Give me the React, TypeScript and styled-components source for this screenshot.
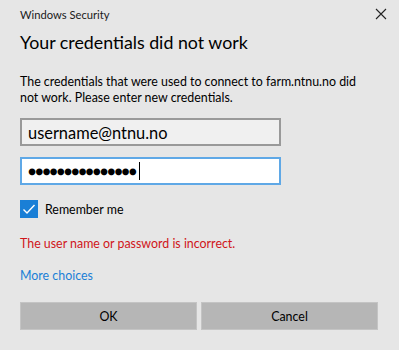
import React from "react";
import styled, { createGlobalStyle } from "styled-components";

const Global = createGlobalStyle`
  html, body { margin: 0; padding: 0; }
  body {
    background: #e6e6e6;
    font-family: "Lato", "Noto Sans", sans-serif;
    color: #000;
  }
`;

const Dialog = styled.div`
  width: 399px;
  height: 350px;
  box-sizing: border-box;
  background: #e6e6e6;
  display: flex;
  flex-direction: column;
  padding: 0 21px 0 20px;
`;

const Header = styled.div`
  height: 28px;
  display: flex;
  align-items: center;
  justify-content: space-between;
`;

const Caption = styled.div`
  font-size: 11.2px;
  color: #1a1a1a;
`;

const Close = styled.div`
  width: 12px;
  height: 12px;
  display: flex;
  margin-right: -9px;
`;

const Title = styled.h1`
  margin: 0;
  font-size: 17.8px;
  font-weight: 400;
  line-height: 28px;
`;

const Message = styled.p`
  margin: 18px 0 0;
  max-width: 342px;
  font-size: 12.4px;
  line-height: 16px;
`;

const Input = styled.div<{ $active?: boolean }>`
  margin-top: ${(p) => (p.$active ? "11px" : "12px")};
  width: 261px;
  height: 28px;
  box-sizing: border-box;
  border: 2px solid ${(p) => (p.$active ? "#5fa8e6" : "#999999")};
  background: ${(p) => (p.$active ? "#ffffff" : "#f0f0f0")};
  display: flex;
  align-items: center;
  padding-left: 6px;
  font-size: 16.4px;
`;

const Dots = styled.span`
  font-size: 13.5px;
  letter-spacing: -0.9px;
`;

const Caret = styled.span`
  width: 1px;
  height: 18px;
  background: #000;
  margin-left: 3px;
`;

const CheckRow = styled.div`
  margin-top: 15px;
  display: flex;
  align-items: center;
  height: 18px;
  gap: 7px;
  font-size: 12.4px;
`;

const Box = styled.div`
  width: 18px;
  height: 18px;
  background: #1a7fd6;
  display: flex;
  align-items: center;
  justify-content: center;
`;

const ErrorText = styled.div`
  margin-top: 16px;
  color: #d0151a;
  font-size: 12.4px;
  line-height: 20px;
`;

const Link = styled.div`
  margin-top: 12px;
  color: #1b7fd6;
  font-size: 12.4px;
  line-height: 20px;
`;

const Buttons = styled.div`
  margin-top: 16px;
  display: grid;
  grid-template-columns: 177px 177px;
  gap: 4px;
`;

const Button = styled.div`
  height: 28px;
  box-sizing: border-box;
  background: #b6b6b6;
  border: 1px solid #c4c4c4;
  display: flex;
  align-items: center;
  justify-content: center;
  font-size: 12.4px;
`;

export default function App() {
  return (
    <>
      <Global />
      <Dialog>
        <Header>
          <Caption>Windows Security</Caption>
          <Close>
            <svg width="12" height="12" viewBox="0 0 12 12">
              <path d="M1 1L11 11M11 1L1 11" stroke="#222" strokeWidth="1.1" fill="none" />
            </svg>
          </Close>
        </Header>
        <Title>Your credentials did not work</Title>
        <Message>
          The credentials that were used to connect to farm.ntnu.no did not work. Please enter new credentials.
        </Message>
        <Input>username@ntnu.no</Input>
        <Input $active>
          <Dots>●●●●●●●●●●●●●●●</Dots>
          <Caret />
        </Input>
        <CheckRow>
          <Box>
            <svg width="14" height="14" viewBox="0 0 14 14">
              <path d="M1.5 7.5L5 11L12.5 3" stroke="#fff" strokeWidth="1.4" fill="none" />
            </svg>
          </Box>
          Remember me
        </CheckRow>
        <ErrorText>The user name or password is incorrect.</ErrorText>
        <Link>More choices</Link>
        <Buttons>
          <Button>OK</Button>
          <Button>Cancel</Button>
        </Buttons>
      </Dialog>
    </>
  );
}
